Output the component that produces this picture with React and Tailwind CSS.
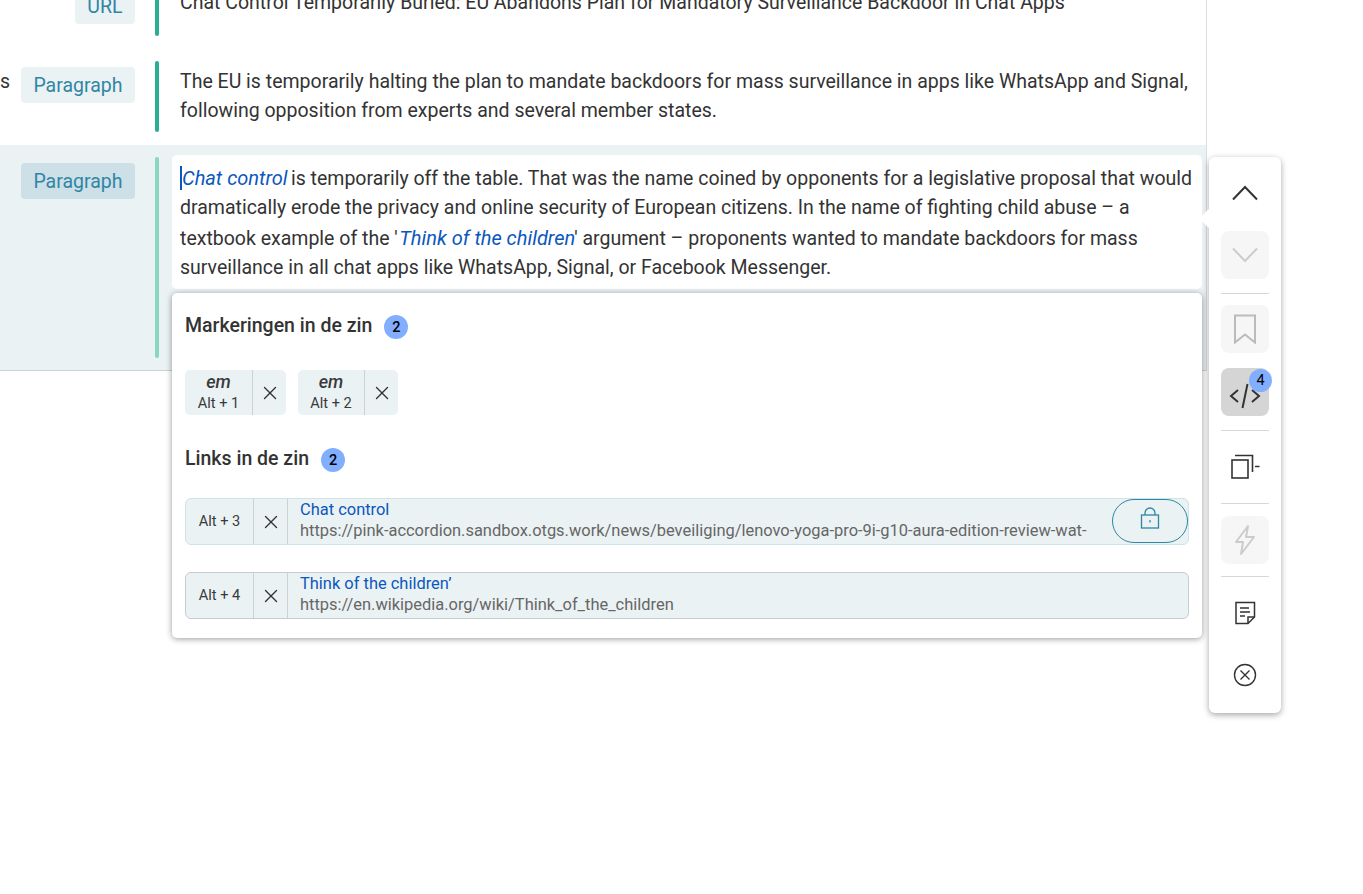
import { X } from "lucide-react";

function Pill({ children, active }) {
  return (
    <div className={`h-9 px-[12.5px] rounded-[4px] flex items-center text-[19.5px] text-[#2f86a4] ${active ? "bg-[#cde0e7]" : "bg-[#ebf2f4]"}`}>
      {children}
    </div>
  );
}

function Badge({ children, className = "" }) {
  return (
    <span className={`w-6 h-6 rounded-full bg-[#82aeff] text-black text-[14.5px] font-medium flex items-center justify-center ${className}`}>
      {children}
    </span>
  );
}

function Chip({ label, keys, labelWidth }) {
  return (
    <div className="h-[45px] flex rounded-[5px] bg-[#ebf2f4]">
      <div className={`${labelWidth} border-r border-[#c9d2d5] flex flex-col items-center text-[#3a3a3a]`}>
        <em className="text-[18px] font-medium leading-[23px]">{label}</em>
        <span className="text-[14.6px] leading-[21px]">{keys}</span>
      </div>
      <div className="w-[33px] flex items-center justify-center">
        <X size={22} strokeWidth={1.5} className="text-[#333]" />
      </div>
    </div>
  );
}

function LinkRow({ keys, title, url, borderColor, locked, className = "" }) {
  return (
    <div className={`h-[47px] flex rounded-[6px] border bg-[#ebf2f4] ${borderColor} ${className}`}>
      <div className="w-[68px] border-r border-[#c9d2d5] flex items-center justify-center text-[14.6px] text-[#3a3a3a]">{keys}</div>
      <div className="w-[34px] border-r border-[#c9d2d5] flex items-center justify-center">
        <X size={22} strokeWidth={1.5} className="text-[#333]" />
      </div>
      <div className="w-[801px] pl-3 text-[16.45px] leading-[21px] whitespace-nowrap overflow-hidden">
        <div className="text-[#0a57bd]">{title}</div>
        <div className="text-[#666]">{url}</div>
      </div>
      {locked && (
        <button className="ml-[23px] w-[76px] h-[44px] rounded-full border border-[#2f86a4] flex items-center justify-center">
          <svg className="mb-[6px]" width="20" height="22" viewBox="0 0 20 22" fill="none" stroke="#2f86a4" strokeWidth="1.3">
            <rect x="1.5" y="8" width="17" height="13" />
            <path d="M5 8V6a5 5 0 0 1 10 0v2" />
            <path d="M10 13v2.500" />
          </svg>
        </button>
      )}
    </div>
  );
}

function ToolButton({ children, tone, className = "" }) {
  const bg = tone === "off" ? "bg-[#f6f6f6]" : tone === "on" ? "bg-[#d5d5d5]" : "";
  return (
    <button className={`relative w-12 h-12 shrink-0 rounded-[8px] flex items-center justify-center ${bg} ${className}`}>
      {children}
    </button>
  );
}

function Toolbar() {
  return (
    <div className="absolute left-[1209px] top-[12px] z-20 w-[72px] h-[556px] bg-white rounded-[6px] shadow-[0_2px_6px_rgba(0,0,0,0.35)] flex flex-col items-center pt-3">
      <div className="absolute -left-[7px] top-[55px] w-[13px] h-[13px] bg-white rotate-45" />
      <ToolButton>
        <svg width="28" height="16" viewBox="0 0 28 16" fill="none" stroke="#333" strokeWidth="2">
          <path d="M2 14.500 14 2l12 12.500" />
        </svg>
      </ToolButton>
      <ToolButton tone="off" className="mt-[14px]">
        <svg width="28" height="16" viewBox="0 0 28 16" fill="none" stroke="#ccc" strokeWidth="2">
          <path d="M2 1.500 14 14 26 1.500" />
        </svg>
      </ToolButton>
      <div className="mt-[14px] w-12 h-px bg-[#d8d8d8]" />
      <ToolButton tone="off" className="mt-[11px]">
        <svg width="24" height="30" viewBox="0 0 24 30" fill="none" stroke="#bbb" strokeWidth="2">
          <path d="M2 1.500h20v27l-10-8-10 8z" />
        </svg>
      </ToolButton>
      <ToolButton tone="on" className="mt-[15px]">
        <svg className="mt-[7px]" width="32" height="26" viewBox="0 0 32 26" fill="none" stroke="#333" strokeWidth="2">
          <path d="M9 7 2 13l7 6M23 7l7 6-7 6M18.500 1l-5 24" />
        </svg>
        <Badge className="absolute top-[1px] -right-[3px] !w-[23px] !h-[23px] font-normal">4</Badge>
      </ToolButton>
      <div className="mt-[14px] w-12 h-px bg-[#d8d8d8]" />
      <ToolButton className="mt-[12px]">
        <svg width="30" height="26" viewBox="0 0 30 26" fill="none" stroke="#333" strokeWidth="1.600">
          <rect x="2" y="6" width="16" height="18" />
          <path d="M5 1.500h17.500V18M25 12.500h4.500" />
        </svg>
      </ToolButton>
      <div className="mt-[12px] w-12 h-px bg-[#d8d8d8]" />
      <ToolButton tone="off" className="mt-[12px]">
        <svg width="22" height="32" viewBox="0 0 22 32" fill="none" stroke="#ccc" strokeWidth="2" strokeLinejoin="round">
          <path d="M14 2 2 18h7l-2 12 13-17h-8z" />
        </svg>
      </ToolButton>
      <div className="mt-[12px] w-12 h-px bg-[#d8d8d8]" />
      <ToolButton className="mt-[12px]">
        <svg width="22" height="24" viewBox="0 0 22 24" fill="none" stroke="#333" strokeWidth="1.500">
          <path d="M2 1.500h18.500V16L14 22.500H2z" />
          <path d="M14 22.500V16h6.500" />
          <path d="M6 7h9M6 11h10M6 15h5" />
        </svg>
      </ToolButton>
      <ToolButton className="mt-[14px]">
        <svg width="24" height="24" viewBox="0 0 24 24" fill="none" stroke="#333" strokeWidth="1.400">
          <circle cx="12" cy="12" r="10.500" />
          <path d="m7.500 7.500 9 9M16.500 7.500l-9 9" />
        </svg>
      </ToolButton>
    </div>
  );
}

function Popover() {
  return (
    <div className="absolute left-[172px] top-[148px] z-10 w-[1030px] h-[345px] bg-white rounded-[5px] shadow-[0_1px_6px_rgba(0,0,0,0.4)] pl-[13px] text-[#333]">
      <div className="flex items-center mt-[19px] h-[26px]">
        <h3 className="text-[19.5px] font-medium leading-[26px] pt-[2px]">Markeringen in de zin</h3>
        <Badge className="ml-3 mt-[4px]">2</Badge>
      </div>
      <div className="flex gap-3 mt-[32px]">
        <Chip label="em" keys="Alt + 1" labelWidth="w-[68px]" />
        <Chip label="em" keys="Alt + 2" labelWidth="w-[67px]" />
      </div>
      <div className="flex items-center mt-[30px] h-[26px]">
        <h3 className="text-[19.5px] font-medium leading-[26px] pt-[2px]">Links in de zin</h3>
        <Badge className="ml-3 mt-[4px]">2</Badge>
      </div>
      <LinkRow
        className="w-[1004px] mt-[27px]"
        borderColor="border-[#cfe3ea]"
        keys="Alt + 3"
        title="Chat control"
        url="https://pink-accordion.sandbox.otgs.work/news/beveiliging/lenovo-yoga-pro-9i-g10-aura-edition-review-wat-"
        locked
      />
      <LinkRow
        className="w-[1004px] mt-[27px]"
        borderColor="border-[#c5cdd0]"
        keys="Alt + 4"
        title="Think of the children’"
        url="https://en.wikipedia.org/wiki/Think_of_the_children"
      />
    </div>
  );
}

export default function App() {
  return (
    <div className="h-[894px] overflow-hidden bg-white">
      <div className="w-[1207px] -mt-[30px] border-r border-[#ddd] font-['Roboto',sans-serif] text-[19.5px] leading-[29px] text-[#333]">
        <div className="flex py-3 border-b border-transparent">
          <div className="w-[135px] shrink-0 flex justify-end pt-[6px]">
            <Pill>URL</Pill>
          </div>
          <div className="w-1 h-[54px] ml-5 rounded-[2px] bg-[#27ae95] shrink-0" />
          <div className="ml-[21px] pt-[5.5px]">
            Chat Control Temporarily Buried: EU Abandons Plan for Mandatory Surveillance Backdoor in Chat Apps
          </div>
        </div>

        <div className="flex py-3 border-b border-transparent">
          <div className="w-[135px] shrink-0 flex justify-between">
            <span className="pt-[5.5px]">s</span>
            <div className="pt-[6px]">
              <Pill>Paragraph</Pill>
            </div>
          </div>
          <div className="w-1 h-[71px] ml-5 rounded-[2px] bg-[#27ae95] shrink-0" />
          <div className="ml-[21px] pt-[5.5px] w-[1020px]">
            The EU is temporarily halting the plan to mandate backdoors for mass surveillance in apps like WhatsApp and Signal, following opposition from experts and several member states.
          </div>
        </div>

        <div className="relative flex py-3 bg-[#ebf2f4] border-b border-[#ccd3d6]">
          <div className="w-[135px] shrink-0 flex justify-end pt-[6px]">
            <div>
              <Pill active>Paragraph</Pill>
            </div>
          </div>
          <div className="w-1 h-[201px] ml-5 rounded-[2px] bg-[#8ad6bf] shrink-0" />
          <div className="ml-[13px] mr-1 -mt-[2px] h-[134px] w-[1030px] bg-white rounded-[5px] pl-2 pt-[8.5px]">
            <em className="text-[20px] text-[#0a57bd] border-l-2 border-[#0a57bd] -mr-[1.5px]">Chat control</em>{" "}
            is temporarily off the table. That was the name coined by opponents for a legislative proposal that would dramatically erode the privacy and online security of European citizens. In the name of fighting child abuse – a textbook example of the '
            <em className="inline-block pt-[2px] pl-[1.5px] -mr-[1px] text-[20px] text-[#0a57bd]">Think of the children</em>
            ' argument – proponents wanted to mandate backdoors for mass surveillance in all chat apps like WhatsApp, Signal, or Facebook Messenger.
          </div>
          <Popover />
          <Toolbar />
        </div>
      </div>
    </div>
  );
}
